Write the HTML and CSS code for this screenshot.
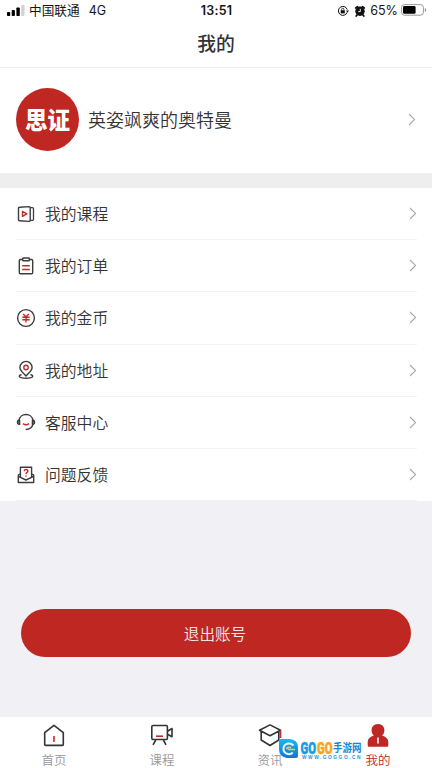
FILE: index.html
```html
<!DOCTYPE html>
<html lang="zh-CN">
<head>
<meta charset="utf-8">
<meta name="viewport" content="width=device-width, initial-scale=1">
<title>我的</title>
<link rel="stylesheet" href="styles.css">
</head>
<body>
<div class="app">
  <header class="header">
    <div class="status">
      <div class="status-left">
        <svg class="signal" width="18" height="12" viewBox="0 0 18 12"><rect x="0" y="7" width="3.2" height="4" rx=".8"/><rect x="4.7" y="5" width="3.2" height="6" rx=".8"/><rect x="9.4" y="2.5" width="3.4" height="8.5" rx=".8"/><rect x="14.2" y="0" width="3.3" height="11" rx=".8" fill="#d2d2d2"/></svg>
        <span class="carrier">中国联通</span>
        <span class="network">4G</span>
      </div>
      <time class="clock">13:51</time>
      <div class="status-right">
        <svg width="12" height="12" viewBox="0 0 12 12" fill="none" stroke="#111"><path d="M10.2 7.3A4.5 4.5 0 1 1 10.2 4.5" stroke-width="1"/><path d="M9 5.4h3L10.5 7.4z" fill="#111" stroke="none"/><rect x="3.7" y="5.2" width="4.1" height="3.2" fill="#111" stroke="none"/><path d="M4.6 5.3V4.4a1.15 1.15 0 0 1 2.3 0v.9" stroke-width=".8"/></svg>
        <svg class="alarm" width="12" height="12" viewBox="0 0 12 12" fill="none"><circle cx="6" cy="6.3" r="4.7" fill="#111"/><path d="M1.8 3 3.5 1.7M8.5 1.7 10.2 3M3 10 2.2 11M9 10l.8 1" stroke="#111" stroke-width="1.8" stroke-linecap="round"/><path d="M6.3 3.8v2.8H4.2" stroke="#fff" stroke-width=".9"/></svg>
        <span class="percent">65%</span>
        <svg class="battery" width="26" height="12" viewBox="0 0 26 12"><rect x=".6" y=".6" width="21.8" height="10.6" rx="2.8" fill="#fff" stroke="#999" stroke-width="1"/><rect x="2" y="2" width="12.6" height="7.8" rx="1.4" fill="#000"/><path d="M23.8 4v4q1.4-.5 1.4-2t-1.4-2" fill="#999"/></svg>
      </div>
    </div>
    <h1 class="title">我的</h1>
  </header>

  <section class="profile">
    <div class="avatar"><span>思证</span></div>
    <div class="name">英姿飒爽的奥特曼</div>
    <svg class="chevron" width="8" height="13" viewBox="0 0 8 13"><path d="m1 1 5.6 5.5L1 12"/></svg>
  </section>

  <nav class="menu">
    <a class="row">
      <svg class="icon" viewBox="0 0 20 20"><path d="M3.500 3.200 13.200 2.600q1 0 1 1v12.800q0 1-1 1L3.500 16.800q-1 0-1-1V4.200q0-1 1-1Z"/><path d="M14.200 3.700h2.300q1 0 1 1v10.600q0 1-1 1h-2.300" stroke-width="1.300"/><path class="red" d="M6.500 7.400v5l4.300-2.500z"/></svg>
      <span>我的课程</span>
      <svg class="chevron" width="8" height="13" viewBox="0 0 8 13"><path d="m1 1 5.6 5.5L1 12"/></svg>
    </a>
    <a class="row">
      <svg class="icon" viewBox="0 0 20 20"><path d="M6.500 3.500h-2q-1.200 0-1.200 1.200v11.800q0 1.200 1.200 1.200h11q1.200 0 1.200-1.200V4.700q0-1.200-1.200-1.200h-2"/><rect x="6.700" y="2" width="6.600" height="2.800" rx=".6"/><path class="red" d="M6.200 9.700h7.600M6.200 13.500h7.600"/></svg>
      <span>我的订单</span>
      <svg class="chevron" width="8" height="13" viewBox="0 0 8 13"><path d="m1 1 5.6 5.5L1 12"/></svg>
    </a>
    <a class="row">
      <svg class="icon" viewBox="0 0 20 20"><circle cx="10" cy="10" r="8.400"/><path class="red" d="m7.200 6 2.800 3 2.800-3M6.300 9.200h7.400M6.300 11.700h7.400M10 9v5.500"/></svg>
      <span>我的金币</span>
      <svg class="chevron" width="8" height="13" viewBox="0 0 8 13"><path d="m1 1 5.6 5.5L1 12"/></svg>
    </a>
    <a class="row">
      <svg class="icon" viewBox="0 0 20 20"><path d="M10 16C7.500 13 3.900 10.700 3.900 7.500a6.100 6.100 0 0 1 12.200 0C16.100 10.700 12.500 13 10 16Z"/><path d="M5.500 14.500c-4.500 1.600-2 3.700 4.500 3.700s9-2.100 4.500-3.700"/><circle class="red" cx="10" cy="7.500" r="2.200"/></svg>
      <span>我的地址</span>
      <svg class="chevron" width="8" height="13" viewBox="0 0 8 13"><path d="m1 1 5.6 5.5L1 12"/></svg>
    </a>
    <a class="row">
      <svg class="icon" viewBox="0 0 20 20"><path d="M3 8.500C4 .4 16 .4 17 8.500M17 12.300q-1.200 4.700-7.300 5.200"/><path d="M3.600 8.200H2.800Q1.400 8.300 1.400 10.300t1.400 2.100h.8zM16.400 8.200h.8q1.400.1 1.400 2.100t-1.400 2.100h-.8z" fill="#777"/><path class="red" d="M7 11.600q3 2.300 6 0"/></svg>
      <span>客服中心</span>
      <svg class="chevron" width="8" height="13" viewBox="0 0 8 13"><path d="m1 1 5.6 5.5L1 12"/></svg>
    </a>
    <a class="row">
      <svg class="icon" viewBox="0 0 20 20"><path d="M4.400 12V2.300h11.200V12M4.400 8.800 2.300 10v7.500h15.400V10l-2.100-1.200M2.300 11.300 10 15l7.700-3.700"/><path class="red" d="M8.200 6.200c0-2.300 3.700-2.300 3.700-.2 0 1.400-1.900 1.300-1.900 3M10 10.400v1.300"/></svg>
      <span>问题反馈</span>
      <svg class="chevron" width="8" height="13" viewBox="0 0 8 13"><path d="m1 1 5.6 5.5L1 12"/></svg>
    </a>
  </nav>

  <button class="logout" type="button">退出账号</button>

  <footer class="tabs">
    <a class="tab">
      <svg width="26" height="24" viewBox="0 0 26 24"><path d="M3.700 8.600 13 1.300l9.300 7.300v12q0 .8-.8.800h-17q-.8 0-.8-.8Z"/><path class="red" d="M13 12v6"/></svg>
      <span>首页</span>
    </a>
    <a class="tab">
      <svg width="26" height="24" viewBox="0 0 26 24"><rect x="2.800" y="1.500" width="15.600" height="14" rx="1.200"/><path d="M18.500 7.200 23 4.500v8.300l-4.500-2.500M6.800 16 4 20.800M14.400 16l2.600 4.800"/><path class="red" d="M7 12.200h7"/></svg>
      <span>课程</span>
    </a>
    <a class="tab">
      <svg width="26" height="24" viewBox="0 0 26 24"><path d="M2.500 6.200 13 .9l10.500 5.300L13 11.700ZM4.200 7.500V16L13 21.500l8.800-5.500V7.500"/><path class="red" d="M23.500 6.500v7.500"/></svg>
      <span>资讯</span>
    </a>
    <a class="tab active">
      <svg width="26" height="24" viewBox="0 0 26 24"><path class="person" d="M13 0c-3.900 0-6.400 2.800-6.400 6.200 0 2.400 1 4.300 2.400 5.300-3.700 1-6.300 3.200-6.300 6.600v3.400q0 1.200 1.200 1.200h18.200q1.200 0 1.200-1.200v-3.400c0-3.400-2.600-5.600-6.300-6.600 1.400-1 2.400-2.900 2.400-5.300C19.400 2.800 16.900 0 13 0Z"/><path d="M13 13.500v6" stroke="#fff"/></svg>
      <span>我的</span>
    </a>
    <svg class="watermark" width="84" height="22" viewBox="0 0 84 22">
      <defs><linearGradient id="wm" x2="0" y2="1"><stop stop-color="#16b9f4"/><stop offset="1" stop-color="#1374d2"/></linearGradient></defs>
      <path d="M2 0h9q8 1 8 8v9q0 2-2 2H8Q0 18 0 10V2Q0 0 2 0" fill="url(#wm)"/>
      <path d="M14.500 6.500C11 2.700 4.500 4.500 4.500 9.800s6.300 6.800 9.300 3.700" fill="none" stroke="#e8f6ff" stroke-width="2"/>
      <path d="M7.500 10.200q1.500-3 4.500-1.400M9 10.500h7" fill="none" stroke="#f9c44c" stroke-width="1.700"/>
      <text class="wm-go" x="21.500" y="14.500" textLength="15.500" lengthAdjust="spacingAndGlyphs">GO</text>
      <text class="wm-go orange" x="38" y="14.500" textLength="15.500" lengthAdjust="spacingAndGlyphs">GO</text>
      <text class="wm-cn" x="54" y="13" textLength="28.500" lengthAdjust="spacingAndGlyphs">手游网</text>
      <text class="wm-url" x="23" y="19.500" textLength="58.500">WWW.GOGGO.CN</text>
    </svg>
  </footer>
</div>
</body>
</html>
```
FILE: styles.css
```css
* { box-sizing: border-box; }
body {
  margin: 0;
  color: #333;
  background: #f0f0f5;
  font-family: "Noto Sans CJK SC", sans-serif;
  font-weight: 350;
}
.app { display: flex; flex-direction: column; width: 432px; height: 768px; overflow: hidden; }
.header { height: 68px; flex: none; background: #fff; border-bottom: 1px solid #ececec; }
.status {
  display: grid;
  grid-template-columns: 1fr auto 1fr;
  align-items: center;
  height: 22px;
  padding: 0 5px 0 7px;
  color: #151515;
  font: 12.5px/20px Inter, "Noto Sans CJK SC", sans-serif;
}
.status-left, .status-right { display: flex; align-items: center; }
.status-right { justify-content: flex-end; }
.signal { margin: -1px 4px 0 0; }
.carrier { font-size: 12.7px; }
.network { margin-left: 9px; font-size: 12.5px; }
.clock { padding-right: 1px; font-weight: 600; font-size: 12.5px; letter-spacing: .2px; }
.alarm { margin: 0 4px 0 5px; }
.battery { margin-top: -2px; }
.percent { margin-right: 3px; font-size: 12.6px; }
.title { margin: 0; font-size: 18.8px; font-weight: 500; line-height: 41px; text-align: center; }
.profile { display: flex; align-items: center; flex: none; height: 105px; padding: 0 16px; background: #fff; }
.avatar {
  display: grid;
  place-items: center;
  width: 63px;
  height: 63px;
  margin-top: -2px;
  border-radius: 50%;
  background: #be2722;
  color: #fff;
  font-size: 22.5px;
  font-weight: 900;
  line-height: 1;
}
.avatar span { transform: translateY(-1px) scaleY(1.08); }
.name { flex: 1; margin: -4px 0 0 9px; font-size: 18px; }
.chevron { flex: none; fill: none; stroke: #aaa; stroke-width: 1.1; }
.profile .chevron { margin-top: -2px; }
.menu { flex: none; border-top: 15px solid #eee; background: #fff; }
.row { display: flex; align-items: center; height: 52.2px; margin: 0 15px 0 16px; border-bottom: 1px solid #f3f3f3; font-size: 15.8px; }
.icon { width: 20px; height: 20px; margin-right: 9px; fill: none; stroke: #3c3c3c; stroke-width: 1.4; stroke-linejoin: round; }
.row span { flex: 1; }
.icon .red, .tab .red { stroke: #c52b2d; }
.logout {
  flex: none;
  width: 390px;
  height: 48px;
  margin: 108.3px auto 0 21px;
  padding: 0 2px 1px 0;
  border: 0;
  border-radius: 24px;
  background: #be2722;
  color: #f9e6e5;
  font: 350 15.6px "Noto Sans CJK SC", sans-serif;
}
.tabs { position: relative; display: flex; height: 51px; margin-top: auto; background: #fff; }
.tab { display: flex; flex: 1; flex-direction: column; align-items: center; padding-top: 7px; color: #999; font-size: 12.5px; line-height: 19px; }
.tab > svg { flex: none; margin-bottom: 1px; fill: none; stroke: #333; stroke-width: 1.6; stroke-linejoin: round; }
.tab span { margin-top: 1px; }
.tab.active { color: #bd2825; }
.tab .person { fill: #bd2825; stroke: none; }
.watermark { position: absolute; left: 279px; top: 22px; }
.wm-go { fill: #129be5; stroke: #129be5; stroke-width: .5; font: 900 17px Roboto, sans-serif; }
.wm-go.orange { fill: #f9a51a; stroke: #f9a51a; }
.wm-cn { fill: #1688d8; font-size: 11.5px; font-weight: 700; }
.wm-url { fill: #2196dc; font: 700 4.8px "Liberation Sans", sans-serif; }
```
